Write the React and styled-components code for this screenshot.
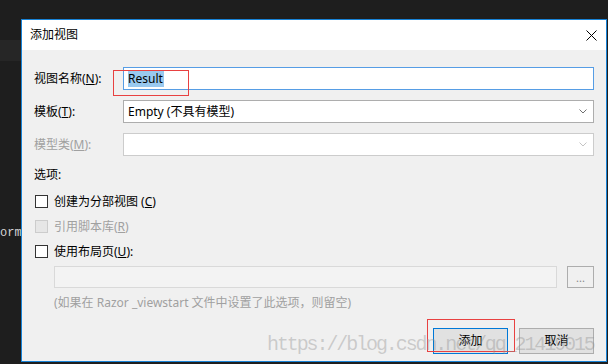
import styled, { createGlobalStyle } from 'styled-components';

const GlobalStyle = createGlobalStyle`
  html, body {
    margin: 0;
    padding: 0;
    background: #1e1e1e;
  }
  * {
    box-sizing: border-box;
  }
`;

const uiFont = `"Noto Sans", "Noto Sans CJK SC", sans-serif`;

export default function App() {
  return (
    <>
      <GlobalStyle />
      <Page>
        <TopBar />
        <Workspace>
          <Gutter>
            <GutterBand />
            <CodeLine>orm</CodeLine>
          </Gutter>
          <Dialog>
            <TitleBar>
              <Title>添加视图</Title>
              <CloseButton aria-label="close">
                <svg width="11" height="11" viewBox="0 0 11 11">
                  <path d="M0.5 0.5 L10.5 10.5 M10.5 0.5 L0.5 10.5" stroke="#000" strokeWidth="1" />
                </svg>
              </CloseButton>
            </TitleBar>
            <Body>
              <FormGrid>
                <Label>
                  视图名称(<u>N</u>):
                </Label>
                <TextBox $focused>
                  <Selected>Result</Selected>
                </TextBox>
                <Label>
                  模板(<u>T</u>):
                </Label>
                <Select>
                  <span>Empty (不具有模型)</span>
                  <Chevron />
                </Select>
                <Label $disabled>
                  模型类(<u>M</u>):
                </Label>
                <Select $disabled>
                  <span />
                  <Chevron $disabled />
                </Select>
              </FormGrid>
              <SectionLabel>选项:</SectionLabel>
              <CheckList>
                <CheckRow>
                  <Box />
                  <span>
                    创建为分部视图 (<u>C</u>)
                  </span>
                </CheckRow>
                <CheckRow $disabled>
                  <Box $disabled />
                  <span>
                    引用脚本库(<u>R</u>)
                  </span>
                </CheckRow>
                <CheckRow>
                  <Box />
                  <span>
                    使用布局页(<u>U</u>):
                  </span>
                </CheckRow>
              </CheckList>
              <PathRow>
                <PathInput />
                <BrowseButton>...</BrowseButton>
              </PathRow>
              <Hint>(如果在 Razor _viewstart 文件中设置了此选项，则留空)</Hint>
              <Footer>
                <Button $primary>添加</Button>
                <Button>取消</Button>
              </Footer>
            </Body>
            <Annotation $left={91} $top={50} $width={76} $height={26} />
            <Annotation $left={405} $top={299} $width={88} $height={33} />
            <Watermark>https://blog.csdn.net/qq_21419015</Watermark>
          </Dialog>
        </Workspace>
      </Page>
    </>
  );
}

function Chevron({ $disabled }) {
  return (
    <svg width="8" height="5" viewBox="0 0 8 5">
      <path
        d="M0.5 0.5 L4 4 L7.5 0.5"
        fill="none"
        stroke={$disabled ? '#c4c4c4' : '#707070'}
        strokeWidth="1"
      />
    </svg>
  );
}

const Page = styled.div`
  width: 608px;
  height: 364px;
  overflow: hidden;
  background: #1e1e1e;
  display: flex;
  flex-direction: column;
`;
const TopBar = styled.div`
  height: 19px;
  flex: none;
  background: #1e1e1e;
`;
const Workspace = styled.div`
  display: flex;
  align-items: flex-start;
`;
const Gutter = styled.div`
  width: 21px;
  height: 345px;
  flex: none;
  display: flex;
  flex-direction: column;
  overflow: hidden;
`;
const GutterBand = styled.div`
  height: 21px;
  margin-top: 21px;
  background: #262626;
`;
const CodeLine = styled.div`
  margin-top: 164px;
  font-family: "Liberation Mono", monospace;
  font-size: 12px;
  line-height: 16px;
  color: #d4d4d4;
  white-space: nowrap;
  margin-left: 0px;
`;
const Dialog = styled.div`
  position: relative;
  width: 586px;
  height: 343px;
  flex: none;
  border: 1px solid #1883d7;
  background: #f0f0f0;
  display: flex;
  flex-direction: column;
  font-family: ${uiFont};
  font-size: 12px;
  color: #000;
`;
const TitleBar = styled.div`
  height: 30px;
  flex: none;
  background: #fff;
  display: flex;
  align-items: center;
  justify-content: space-between;
  padding: 0 9px 0 8px;
`;
const Title = styled.span`
  font-size: 12px;
  line-height: 16px;
`;
const CloseButton = styled.div`
  width: 11px;
  height: 11px;
  display: flex;
`;
const Body = styled.div`
  display: flex;
  flex-direction: column;
  padding: 17px 12px 0 12px;
`;
const FormGrid = styled.div`
  display: grid;
  grid-template-columns: 89px 1fr;
  grid-auto-rows: 23px;
  row-gap: 10px;
  align-items: center;
`;
const Label = styled.span`
  line-height: 16px;
  color: ${(p) => (p.$disabled ? '#a0a0a0' : '#000')};
  white-space: nowrap;
`;
const TextBox = styled.div`
  height: 23px;
  background: #fff;
  border: 1px solid ${(p) => (p.$focused ? '#569de5' : '#adadad')};
  display: flex;
  align-items: center;
  padding-left: 4px;
`;
const Selected = styled.span`
  background: #99c9ef;
  line-height: 17px;
  padding-right: 1px;
`;
const Select = styled.div`
  height: 23px;
  background: #fff;
  border: 1px solid ${(p) => (p.$disabled ? '#cccccc' : '#adadad')};
  display: flex;
  align-items: center;
  justify-content: space-between;
  padding: 0 6px 0 4px;
  line-height: 16px;
`;
const SectionLabel = styled.div`
  margin-top: 11px;
  line-height: 16px;
`;
const CheckList = styled.div`
  display: flex;
  flex-direction: column;
  margin-top: 6px;
`;
const CheckRow = styled.div`
  height: 25px;
  display: flex;
  align-items: center;
  gap: 6px;
  padding-left: 1px;
  line-height: 16px;
  color: ${(p) => (p.$disabled ? '#a0a0a0' : '#000')};
`;
const Box = styled.span`
  width: 13px;
  height: 13px;
  flex: none;
  border: 1px solid ${(p) => (p.$disabled ? '#cccccc' : '#333333')};
  background: ${(p) => (p.$disabled ? '#e6e6e6' : '#fff')};
`;
const PathRow = styled.div`
  display: flex;
  gap: 10px;
  margin-top: 2px;
  padding-left: 20px;
`;
const PathInput = styled.div`
  flex: 1;
  height: 22px;
  background: #f3f3f3;
  border: 1px solid #d9d9d9;
`;
const BrowseButton = styled.div`
  width: 27px;
  height: 22px;
  border: 1px solid #adadad;
  background: #f0f0f0;
  color: #888;
  display: flex;
  align-items: center;
  justify-content: center;
  font-size: 11px;
  line-height: 1;
`;
const Hint = styled.div`
  margin-top: 7px;
  padding-left: 20px;
  line-height: 16px;
  color: #a0a0a0;
  white-space: nowrap;
`;
const Footer = styled.div`
  display: flex;
  justify-content: flex-end;
  gap: 11px;
  margin-top: 17px;
`;
const Button = styled.div`
  width: 75px;
  height: 26px;
  background: #e1e1e1;
  border: 1px solid ${(p) => (p.$primary ? '#0078d7' : '#adadad')};
  display: flex;
  align-items: center;
  justify-content: center;
  line-height: 16px;
`;
const Annotation = styled.div`
  position: absolute;
  left: ${(p) => p.$left}px;
  top: ${(p) => p.$top}px;
  width: ${(p) => p.$width}px;
  height: ${(p) => p.$height}px;
  border: 1px solid #e84141;
  pointer-events: none;
`;
const Watermark = styled.div`
  position: absolute;
  left: 245px;
  top: 315px;
  font-family: "Liberation Mono", monospace;
  font-size: 20px;
  line-height: 20px;
  letter-spacing: -2.1px;
  color: rgba(140, 140, 140, 0.38);
  white-space: nowrap;
  pointer-events: none;
`;
